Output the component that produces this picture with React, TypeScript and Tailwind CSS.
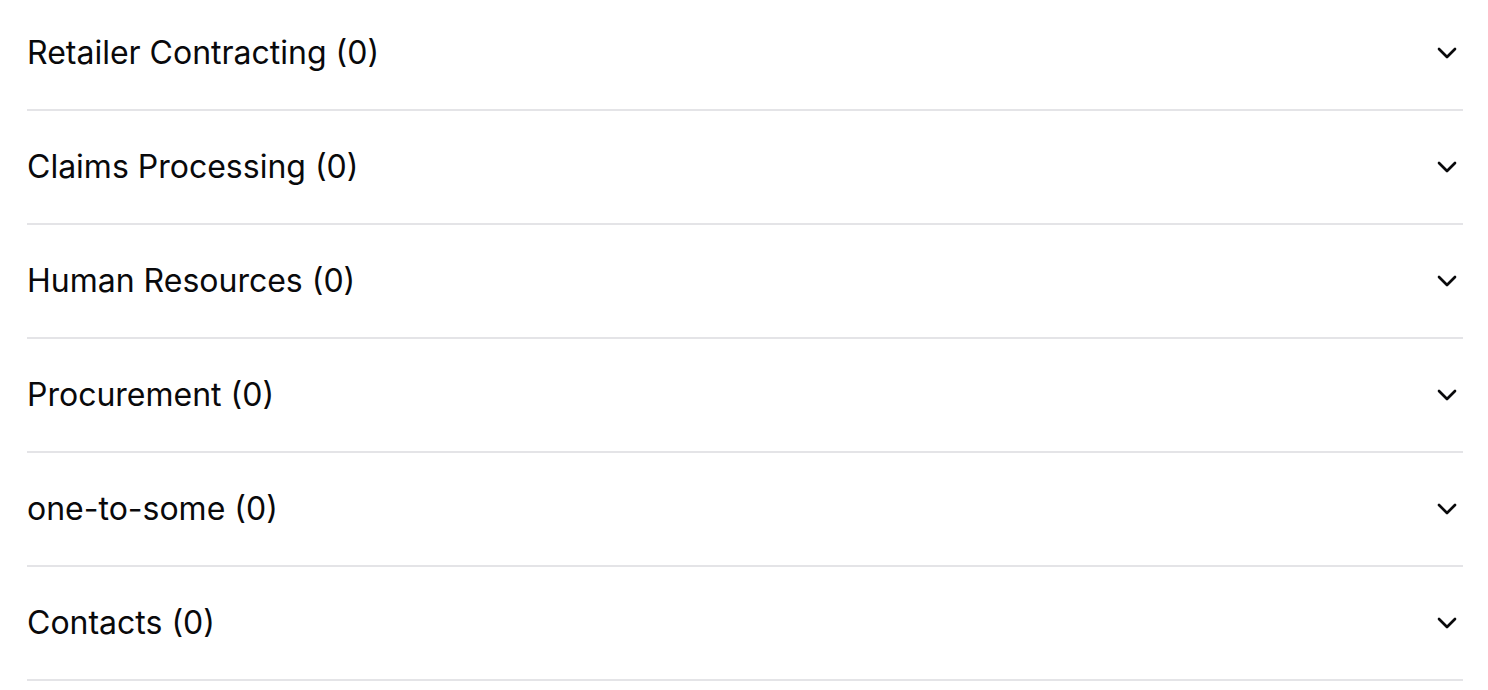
import { ChevronDown } from 'lucide-react';

const sections = [
  { name: 'Retailer Contracting', count: 0 },
  { name: 'Claims Processing', count: 0 },
  { name: 'Human Resources', count: 0 },
  { name: 'Procurement', count: 0 },
  { name: 'one-to-some', count: 0 },
  { name: 'Contacts', count: 0 },
];

export default function App() {
  return (
    <div className="min-h-screen overflow-hidden bg-white font-['Inter',sans-serif] text-[#09090b]">
      <div className="-mt-[3px] ml-[27px] mr-[25px]">
        {sections.map((section) => (
          <button
            key={section.name}
            type="button"
            className="flex h-[114px] w-full items-center justify-between border-b-2 border-[#e4e4e7] text-left"
          >
            <span className="text-[32px] font-normal leading-none">
              {section.name} ({section.count})
            </span>
            <ChevronDown className="h-8 w-8 shrink-0" strokeWidth={2} />
          </button>
        ))}
      </div>
    </div>
  );
}
